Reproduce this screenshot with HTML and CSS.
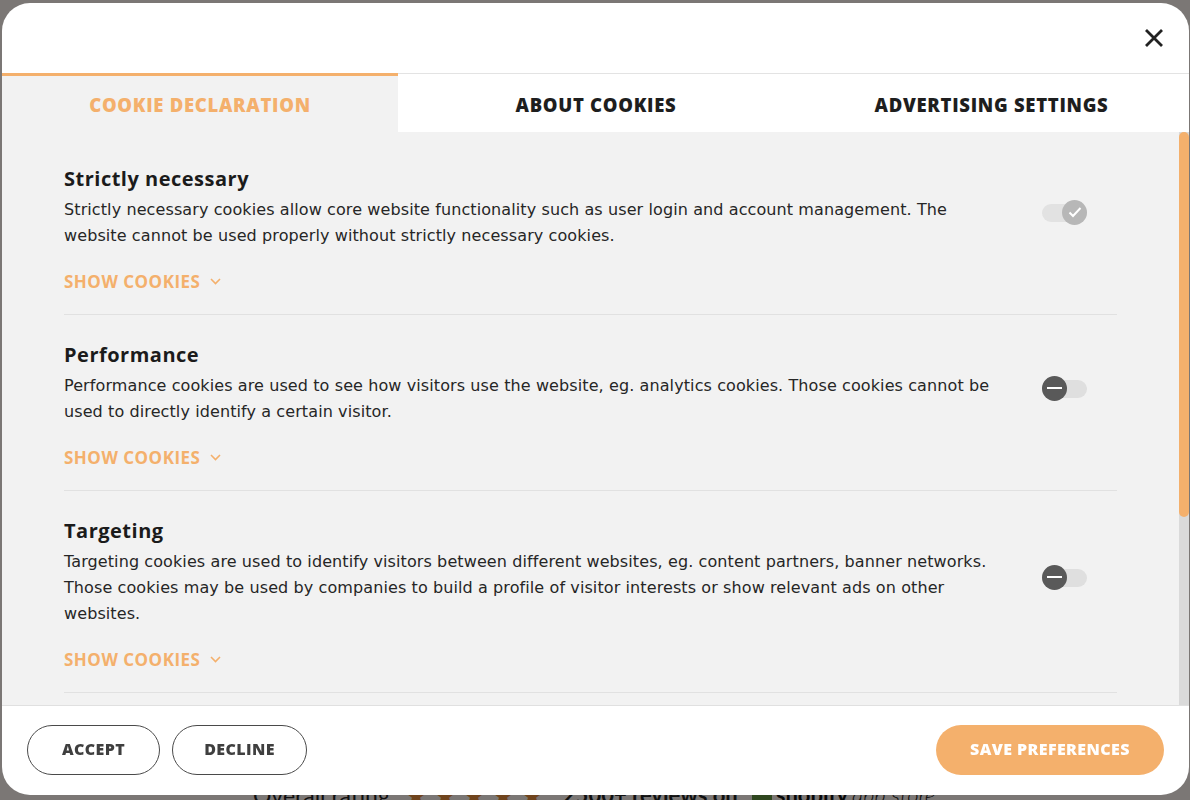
FILE: index.html
```html
<!DOCTYPE html>
<html lang="en">
<head>
<meta charset="utf-8">
<title>Cookie preferences</title>
<link rel="stylesheet" href="styles.css">
</head>
<body>
<div class="page">
  <div class="rating">
    <span class="rating-label">Overall rating</span>
    <span class="stars">★★★★★</span>
    <span class="rating-count">2500+ reviews on</span>
    <span class="shopify"><span class="bag"></span><b>shopify</b> <i>app store</i></span>
  </div>
</div>

<div class="overlay">
  <div class="modal">
    <div class="modal-head">
      <button class="close" aria-label="Close">
        <svg width="20" height="20" viewBox="0 0 20 20"><path d="M2 2L18 18M18 2L2 18" stroke="#222" stroke-width="2.8" fill="none"/></svg>
      </button>
    </div>

    <div class="tabs">
      <div class="tab active">COOKIE DECLARATION</div>
      <div class="tab">ABOUT COOKIES</div>
      <div class="tab">ADVERTISING SETTINGS</div>
    </div>

    <div class="body">
      <div class="scroll">
        <section class="group">
          <div class="row">
            <div class="text">
              <h3 class="title">Strictly necessary</h3>
              <p class="desc">Strictly necessary cookies allow core website functionality such as user login and account management. The website cannot be used properly without strictly necessary cookies.</p>
            </div>
            <div class="toggle on">
              <span class="knob"><svg width="14" height="12" viewBox="0 0 14 12"><path d="M1.5 6.5L5 10L12.5 2" stroke="#fff" stroke-width="2" fill="none"/></svg></span>
            </div>
          </div>
          <div class="show">SHOW COOKIES <svg width="11" height="7" viewBox="0 0 11 7"><path d="M1 1L5.5 5.5L10 1" stroke="#f4b06c" stroke-width="1.6" fill="none"/></svg></div>
        </section>

        <section class="group">
          <div class="row">
            <div class="text">
              <h3 class="title">Performance</h3>
              <p class="desc">Performance cookies are used to see how visitors use the website, eg. analytics cookies. Those cookies cannot be used to directly identify a certain visitor.</p>
            </div>
            <div class="toggle off">
              <span class="knob"><span class="minus"></span></span>
            </div>
          </div>
          <div class="show">SHOW COOKIES <svg width="11" height="7" viewBox="0 0 11 7"><path d="M1 1L5.5 5.5L10 1" stroke="#f4b06c" stroke-width="1.6" fill="none"/></svg></div>
        </section>

        <section class="group">
          <div class="row">
            <div class="text">
              <h3 class="title">Targeting</h3>
              <p class="desc">Targeting cookies are used to identify visitors between different websites, eg. content partners, banner networks. Those cookies may be used by companies to build a profile of visitor interests or show relevant ads on other websites.</p>
            </div>
            <div class="toggle off">
              <span class="knob"><span class="minus"></span></span>
            </div>
          </div>
          <div class="show">SHOW COOKIES <svg width="11" height="7" viewBox="0 0 11 7"><path d="M1 1L5.5 5.5L10 1" stroke="#f4b06c" stroke-width="1.6" fill="none"/></svg></div>
        </section>

        <section class="group">
          <div class="row">
            <div class="text">
              <h3 class="title">Functionality</h3>
              <p class="desc">Functionality cookies are used to remember visitor information on the website, eg. language, timezone, enhanced content.</p>
            </div>
            <div class="toggle off">
              <span class="knob"><span class="minus"></span></span>
            </div>
          </div>
          <div class="show">SHOW COOKIES <svg width="11" height="7" viewBox="0 0 11 7"><path d="M1 1L5.5 5.5L10 1" stroke="#f4b06c" stroke-width="1.6" fill="none"/></svg></div>
        </section>
      </div>
      <div class="scrollbar"><div class="thumb"></div></div>
    </div>

    <div class="foot">
      <div class="foot-left">
        <button class="btn outline accept">ACCEPT</button>
        <button class="btn outline decline">DECLINE</button>
      </div>
      <button class="btn primary">SAVE PREFERENCES</button>
    </div>
  </div>
</div>
</body>
</html>
```

FILE: styles.css
```css
* { box-sizing: border-box; }

html, body {
  margin: 0;
  padding: 0;
  height: 100%;
  overflow: hidden;
}

body {
  background: #f6eeea;
  font-family: "Open Sans", "Liberation Sans", sans-serif;
  color: #222;
}

.page {
  padding-top: 778px;
}

.rating {
  display: flex;
  align-items: center;
  gap: 14px;
  margin-left: 253px;
  font-family: "Lato", "Liberation Sans", sans-serif;
  font-size: 23px;
  color: #222;
}

.stars {
  color: #e0893a;
  letter-spacing: 5px;
  font-size: 27px;
}

.rating-count {
  font-weight: 700;
  font-size: 22px;
}

.shopify {
  display: flex;
  align-items: center;
  gap: 4px;
  color: #111;
  font-size: 22px;
}

.shopify .bag {
  width: 20px;
  height: 22px;
  border-radius: 3px;
  background: #5e8e3e;
}

.shopify i { font-weight: 300; }

.overlay {
  position: fixed;
  inset: 0;
  background: rgba(0, 0, 0, 0.5);
  padding: 3px 1px 5px 2px;
}

.modal {
  height: 792px;
  background: #fff;
  border-radius: 28px;
  overflow: hidden;
  display: flex;
  flex-direction: column;
}

.modal-head {
  height: 70px;
  flex: none;
  display: flex;
  justify-content: flex-end;
  align-items: center;
  padding-right: 25px;
}

.close {
  width: 20px;
  height: 20px;
  padding: 0;
  border: 0;
  background: none;
  display: flex;
  margin-top: -1px;
}

.tabs {
  flex: none;
  display: grid;
  grid-template-columns: 396px 396px 1fr;
  border-top: 1px solid #e3e3e3;
  height: 59px;
}

.tab {
  display: flex;
  align-items: center;
  justify-content: center;
  font-size: 18.5px;
  font-weight: 800;
  color: #1e1e1e;
  background: #fff;
  letter-spacing: 0.7px;
  padding-top: 2px;
}

.tab.active {
  background: #f2f2f2;
  color: #f4b06c;
  margin-top: -1px;
  border-top: 3px solid #f4b06c;
  padding-top: 0;
}

.body {
  flex: 1;
  min-height: 0;
  display: flex;
  background: #f2f2f2;
  border-bottom: 1px solid #e0e0e0;
}

.scroll {
  flex: 1;
  overflow: hidden;
  padding: 7px 62px 0 62px;
}

.group {
  padding: 26px 0 20.5px;
  border-bottom: 1px solid #e1e1e1;
}

.row {
  display: flex;
  align-items: center;
}

.text {
  flex: 1;
  min-width: 0;
}

.title {
  margin: 0;
  font-size: 20px;
  line-height: 28px;
  font-weight: 700;
  letter-spacing: 0.5px;
  color: #1b1b1b;
}

.desc {
  margin: 4px 0 0;
  font-family: "DejaVu Sans", "Open Sans", sans-serif;
  font-size: 16px;
  letter-spacing: 0.1px;
  line-height: 26px;
  color: #262626;
}

.toggle {
  flex: none;
  position: relative;
  width: 45px;
  height: 18px;
  border-radius: 9px;
  background: #dfdfdf;
  margin: 11px 30px 0 42px;
}

.knob {
  position: absolute;
  top: -4px;
  width: 25px;
  height: 25px;
  border-radius: 50%;
  display: flex;
  align-items: center;
  justify-content: center;
}

.toggle.on { background: #e2e2e2; }

.toggle.on .knob {
  right: 0;
  background: #b7b7b7;
}

.toggle.off .knob {
  left: 0;
  background: #595959;
}

.minus {
  width: 15px;
  height: 2.5px;
  background: #fff;
}

.show {
  margin-top: 20.5px;
  line-height: 24px;
  font-size: 17px;
  font-weight: 700;
  letter-spacing: 0.5px;
  color: #f4b06c;
  display: flex;
  align-items: center;
  gap: 10px;
}

.scrollbar {
  flex: none;
  width: 10px;
  background: #dadada;
}

.thumb {
  height: 385px;
  border-radius: 5px;
  background: #f4b06c;
}

.foot {
  flex: none;
  height: 89px;
  display: flex;
  justify-content: space-between;
  align-items: flex-start;
  padding: 19px 25px 0 25px;
}

.foot-left {
  display: flex;
  gap: 12px;
}

.btn {
  height: 50px;
  border-radius: 25px;
  font-family: inherit;
  font-size: 16px;
  font-weight: 800;
  letter-spacing: 0.4px;
  cursor: pointer;
  padding: 0 0 2px;
}

.btn.outline {
  background: #fff;
  border: 1px solid #4a4a4a;
  color: #3f3f3f;
}

.accept { width: 133px; }
.decline { width: 135px; }

.btn.primary {
  width: 228px;
  border: 0;
  background: #f4b06c;
  color: #fff;
}
```
